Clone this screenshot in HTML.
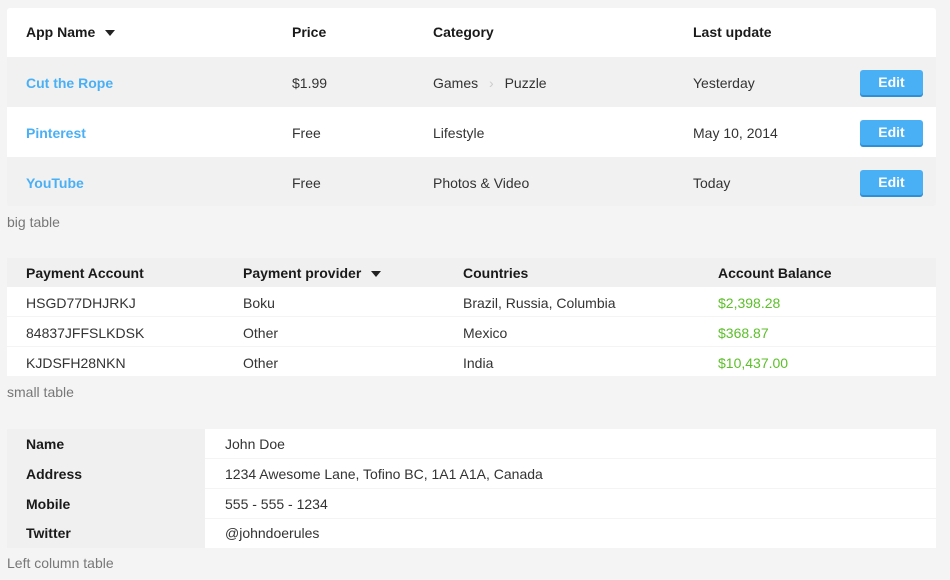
<!DOCTYPE html>
<html><head><style>
*{margin:0;padding:0;box-sizing:border-box}
body{width:950px;height:580px;background:#f4f4f4;font-family:"Liberation Sans",sans-serif;font-size:14px;color:#333;position:relative;overflow:hidden}
.a{position:absolute;white-space:nowrap}
.row{position:absolute;left:7px;width:929px}
.b{font-weight:bold;color:#1a1a1a}
.lnk{color:#4ab0f5;font-weight:bold}
.btn{position:absolute;left:860px;width:63px;height:25px;background:#4ab0f5;border-radius:3px;box-shadow:0 2px 0 #2f8fd3;color:#fff;font-weight:bold;text-align:center;line-height:25px;font-size:14px}
.cap{color:#777;font-size:14px}
.g{color:#5cbf2a}
.tri{display:inline-block;width:0;height:0;border-left:5px solid transparent;border-right:5px solid transparent;border-top:6px solid #222;vertical-align:middle;margin-left:10px}
</style></head><body>
<div class="row" style="top:8px;height:49px;background:#fff;border-radius:3px 3px 0 0"></div>
<div class="row" style="top:57px;height:50px;background:#f1f1f1"></div>
<div class="row" style="top:107px;height:50px;background:#fff"></div>
<div class="row" style="top:157px;height:49px;background:#f1f1f1;border-radius:0 0 3px 3px"></div>
<div class="a b" style="left:26px;top:24px">App Name<span class="tri"></span></div>
<div class="a b" style="left:292px;top:24px">Price</div>
<div class="a b" style="left:433px;top:24px">Category</div>
<div class="a b" style="left:693px;top:24px">Last update</div>

<div class="a lnk" style="left:26px;top:75px">Cut the Rope</div>
<div class="a" style="left:292px;top:75px">$1.99</div>
<div class="a" style="left:433px;top:75px">Games <span style="color:#ccc;margin:0 7px">›</span> Puzzle</div>
<div class="a" style="left:693px;top:75px">Yesterday</div>
<div class="btn" style="top:70px">Edit</div>

<div class="a lnk" style="left:26px;top:125px">Pinterest</div>
<div class="a" style="left:292px;top:125px">Free</div>
<div class="a" style="left:433px;top:125px">Lifestyle</div>
<div class="a" style="left:693px;top:125px">May 10, 2014</div>
<div class="btn" style="top:120px">Edit</div>

<div class="a lnk" style="left:26px;top:175px">YouTube</div>
<div class="a" style="left:292px;top:175px">Free</div>
<div class="a" style="left:433px;top:175px">Photos &amp; Video</div>
<div class="a" style="left:693px;top:175px">Today</div>
<div class="btn" style="top:170px">Edit</div>

<div class="a cap" style="left:7px;top:214px">big table</div>

<div class="row" style="top:258px;height:29px;background:#f0f0f0"></div>
<div class="row" style="top:287px;height:29px;background:#fff"></div>
<div class="row" style="top:317px;height:29px;background:#fff"></div>
<div class="row" style="top:347px;height:29px;background:#fff"></div>
<div class="a b" style="left:26px;top:265px">Payment Account</div>
<div class="a b" style="left:243px;top:265px">Payment provider<span class="tri"></span></div>
<div class="a b" style="left:463px;top:265px">Countries</div>
<div class="a b" style="left:718px;top:265px">Account Balance</div>
<div class="a" style="left:26px;top:295px">HSGD77DHJRKJ</div>
<div class="a" style="left:243px;top:295px">Boku</div>
<div class="a" style="left:463px;top:295px">Brazil, Russia, Columbia</div>
<div class="a g" style="left:718px;top:295px">$2,398.28</div>
<div class="a" style="left:26px;top:325px">84837JFFSLKDSK</div>
<div class="a" style="left:243px;top:325px">Other</div>
<div class="a" style="left:463px;top:325px">Mexico</div>
<div class="a g" style="left:718px;top:325px">$368.87</div>
<div class="a" style="left:26px;top:355px">KJDSFH28NKN</div>
<div class="a" style="left:243px;top:355px">Other</div>
<div class="a" style="left:463px;top:355px">India</div>
<div class="a g" style="left:718px;top:355px">$10,437.00</div>
<div class="a cap" style="left:7px;top:384px">small table</div>

<div class="a" style="left:7px;top:429px;width:198px;height:119px;background:#f0f0f0"></div>
<div class="a" style="left:205px;top:429px;width:731px;height:29px;background:#fff"></div>
<div class="a" style="left:205px;top:459px;width:731px;height:29px;background:#fff"></div>
<div class="a" style="left:205px;top:489px;width:731px;height:29px;background:#fff"></div>
<div class="a" style="left:205px;top:519px;width:731px;height:29px;background:#fff"></div>
<div class="a b" style="left:26px;top:436px">Name</div>
<div class="a b" style="left:26px;top:466px">Address</div>
<div class="a b" style="left:26px;top:496px">Mobile</div>
<div class="a b" style="left:26px;top:525px">Twitter</div>
<div class="a" style="left:225px;top:436px">John Doe</div>
<div class="a" style="left:225px;top:466px">1234 Awesome Lane, Tofino BC, 1A1 A1A, Canada</div>
<div class="a" style="left:225px;top:496px">555 - 555 - 1234</div>
<div class="a" style="left:225px;top:525px">@johndoerules</div>
<div class="a cap" style="left:7px;top:555px">Left column table</div>
</body></html>
